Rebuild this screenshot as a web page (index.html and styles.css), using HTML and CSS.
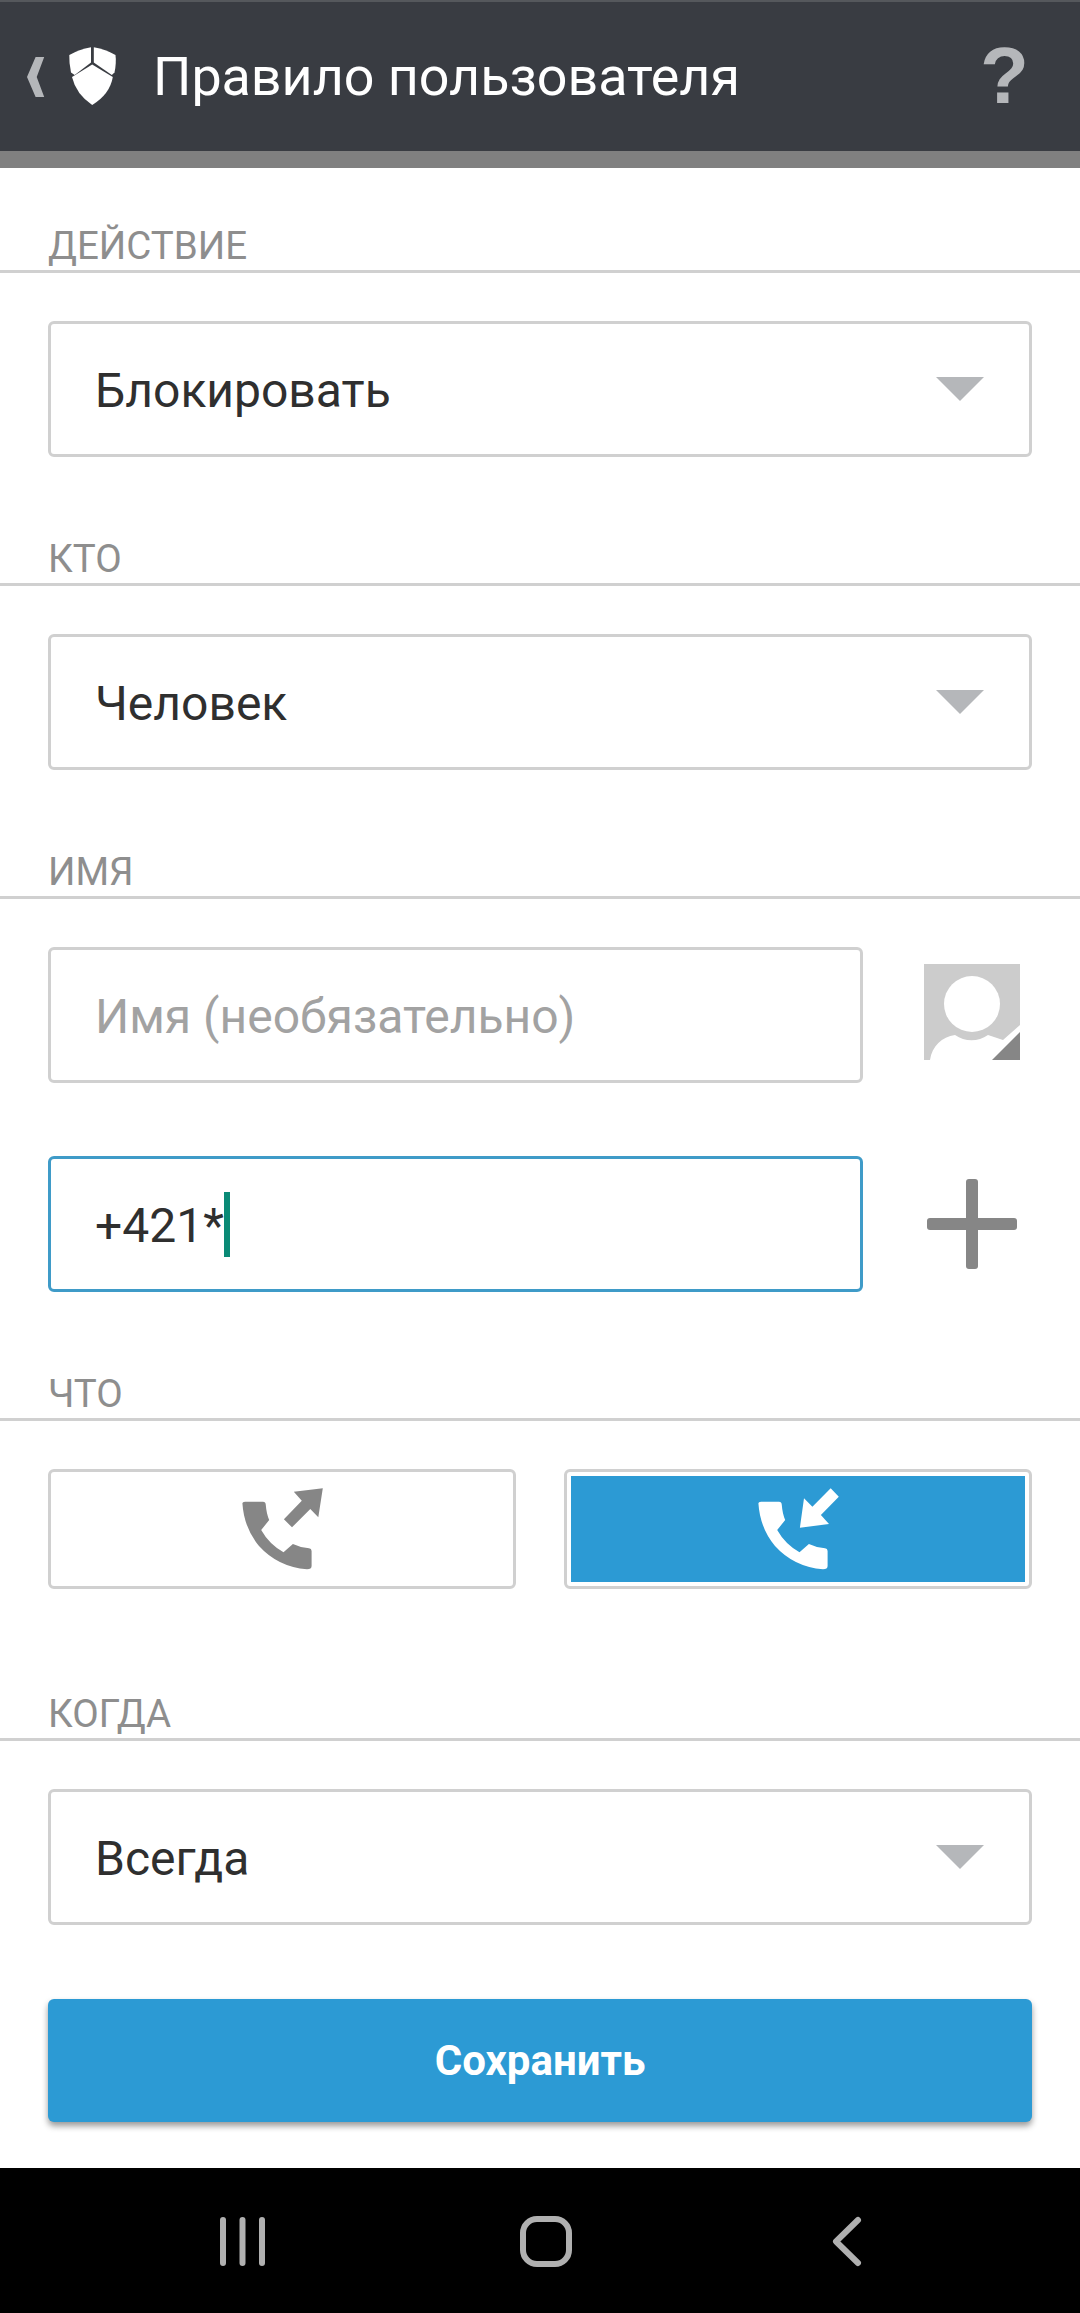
FILE: index.html
```html
<!DOCTYPE html>
<html lang="ru">
<head>
<meta charset="utf-8">
<title>Правило пользователя</title>
<link rel="stylesheet" href="styles.css">
</head>
<body>
<div class="app">
  <header class="header">
    <svg class="back" viewBox="0 0 18 40"><polygon points="17.2,0 8.6,0 0,20 8.6,40 17.2,40 9.7,20"/></svg>
    <svg class="shield" viewBox="0 0 48 58"><path d="M22 0.300V15.500L5.700 28 2 25.500Q0 16 0.300 8Q10 2.500 22 0.300Z"/><path d="M24.800 0.300V15.500L42.800 28 45.500 25.500Q47.500 16 46.500 8Q37 2.500 24.800 0.300Z"/><path d="M23.200 17.500L43.800 30Q41 47 23.200 58Q7 47 3 30Z"/></svg>
    <h1 class="title">Правило пользователя</h1>
    <span class="help">?</span>
  </header>
  <main class="form">
    <section class="section">
      <h2 class="section-head">ДЕЙСТВИЕ</h2>
      <div class="section-body">
        <div class="field select"><span>Блокировать</span><i class="caret-down"></i></div>
      </div>
    </section>
    <section class="section">
      <h2 class="section-head">КТО</h2>
      <div class="section-body">
        <div class="field select"><span>Человек</span><i class="caret-down"></i></div>
      </div>
    </section>
    <section class="section section-name">
      <h2 class="section-head">ИМЯ</h2>
      <div class="section-body rows">
        <div class="row">
          <div class="field grow placeholder">Имя (необязательно)</div>
          <svg class="side-icon avatar" viewBox="0 0 96 96">
            <rect width="96" height="96" fill="#cccccc"/>
            <circle cx="48" cy="40" r="28" fill="#fff"/>
            <path d="M6 96C8 82 18 73 31 71C41 78 54 78 64 71L79 76L96 61V96Z" fill="#fff"/>
            <polygon points="96,68 68,96 96,96" fill="#868686"/>
          </svg>
        </div>
        <div class="row">
          <div class="field grow active">+421*<i class="text-caret"></i></div>
          <svg class="side-icon plus" viewBox="0 0 96 90">
            <rect x="3" y="39" width="90" height="12" rx="3"/>
            <rect x="42" y="0" width="12" height="90" rx="3"/>
          </svg>
        </div>
      </div>
    </section>
    <section class="section section-what">
      <h2 class="section-head">ЧТО</h2>
      <div class="section-body toggles">
        <div class="toggle">
          <svg class="call" viewBox="0 0 84 82"><path d="M2.400 15.300Q2.400 13.700 5 13.700H23Q25.600 13.700 25.800 17Q26.500 26 29.200 32L21.200 42Q29 56 43.500 64.300L52.900 56Q60 59.500 69 60.300Q71.600 60.500 71.600 63V78Q71.600 81.300 67 81.300Q38 79 19 58Q4 40 2.400 15.300Z"/><polygon points="82.800,0.300 53.800,3.700 61.800,12.700 43.900,31.300 52,39.300 70.300,21 78.300,29.300"/></svg>
        </div>
        <div class="toggle on">
          <div class="toggle-fill">
            <svg class="call" viewBox="0 0 84 82"><path d="M2.400 15.300Q2.400 13.700 5 13.700H23Q25.600 13.700 25.800 17Q26.500 26 29.200 32L21.200 42Q29 56 43.500 64.300L52.900 56Q60 59.500 69 60.300Q71.600 60.500 71.600 63V78Q71.600 81.300 67 81.300Q38 79 19 58Q4 40 2.400 15.300Z"/><polygon points="43.900,39.700 73,36 64.900,27 82.800,8.700 74.700,0.300 56.400,18.700 48,10.300"/></svg>
          </div>
        </div>
      </div>
    </section>
    <section class="section">
      <h2 class="section-head">КОГДА</h2>
      <div class="section-body">
        <div class="field select"><span>Всегда</span><i class="caret-down"></i></div>
      </div>
    </section>
    <div class="save-wrap"><button class="save">Сохранить</button></div>
  </main>
  <nav class="nav">
    <svg class="nav-svg" viewBox="0 0 1080 145">
      <g fill="#b0b0b0">
        <rect x="220" y="49" width="6" height="49" rx="3"/>
        <rect x="239.500" y="49" width="6" height="49" rx="3"/>
        <rect x="259" y="49" width="6" height="49" rx="3"/>
      </g>
      <rect x="523" y="51" width="46" height="45" rx="14" fill="none" stroke="#b0b0b0" stroke-width="6"/>
      <path d="M858 52L836 73.500L858 95" fill="none" stroke="#b0b0b0" stroke-width="6" stroke-linecap="round" stroke-linejoin="round"/>
    </svg>
  </nav>
</div>
</body>
</html>
```
FILE: styles.css
```css
* { box-sizing: border-box; }
html, body { margin: 0; padding: 0; }
body { background: #fff; font-family: Roboto, "Noto Sans", sans-serif; color: #2f2f2f; }
.app { width: 1080px; height: 2313px; display: flex; flex-direction: column; overflow: hidden; }

.header {
  height: 168px;
  background: #393c42;
  border-top: 2px solid #55585c;
  border-bottom: 17px solid #808080;
  display: flex;
  align-items: center;
  padding: 0 48px 0 27px;
}
.back { width: 18px; height: 40px; fill: #b5b7ba; }
.shield { width: 48px; height: 58px; fill: #fff; margin-left: 24px; margin-top: -2px; }
.title { margin: 0 0 0 36px; font-size: 53.8px; font-weight: 400; color: #fff; flex: 1; white-space: nowrap; }
.help { font-family: "Liberation Sans", sans-serif; font-weight: 700; font-size: 80px; line-height: 1; color: #b5b7ba; width: 44px; text-align: center; margin-right: 8px; margin-top: -2px; }

.form { flex: 1; display: flex; flex-direction: column; }
.section-head {
  margin: 39px 0 0;
  height: 66px;
  border-bottom: 3px solid #d0d0d0;
  padding: 19px 0 0 48px;
  font-size: 38.5px;
  line-height: 40px;
  font-weight: 400;
  color: #8e8e8e;
}
.section-body { padding: 48px 48px 24px; }
.section-what .section-body { padding-bottom: 47px; }

.field {
  height: 136px;
  border: 3px solid #d0d0d0;
  border-radius: 6px;
  display: flex;
  align-items: center;
  padding: 3px 45px 0 44px;
  font-size: 48px;
  color: #2f2f2f;
  background: #fff;
}
.select { justify-content: space-between; }
.caret-down { width: 0; height: 0; margin-top: -3px; border-left: 24px solid transparent; border-right: 24px solid transparent; border-top: 24px solid #b5b7ba; }
.grow { flex: 1; }
.placeholder { color: #a2a2a2; }
.active { border-color: #3f9bc8; }
.text-caret { width: 6px; height: 65px; background: #0a8a76; margin-top: -3px; }
.rows { display: flex; flex-direction: column; gap: 73px; }
.row { display: flex; align-items: center; gap: 61px; }
.side-icon { width: 96px; flex: none; margin-right: 12px; }
.avatar { height: 96px; margin-top: -6px; }
.plus { height: 90px; fill: #868686; }

.toggles { display: grid; grid-template-columns: 1fr 1fr; gap: 48px; }
.toggle { height: 120px; border: 3px solid #d0d0d0; border-radius: 6px; display: flex; align-items: center; justify-content: center; background: #fff; }
.toggle.on { padding: 4px; }
.toggle-fill { flex: 1; height: 100%; background: #2c9ad4; display: flex; align-items: center; justify-content: center; }
.call { width: 84px; height: 82px; fill: #868686; }
.on .call { fill: #fff; }

.save-wrap { padding: 50px 48px 0; }
.save {
  width: 100%;
  height: 123px;
  border: 0;
  border-radius: 6px;
  background: #2c9ad4;
  color: #fff;
  font-family: Roboto, sans-serif;
  font-size: 42px;
  font-weight: 700;
  box-shadow: 0 4px 6px rgba(0,0,0,.4);
}

.nav { height: 145px; background: #000; flex: none; }
.nav-svg { display: block; width: 1080px; height: 145px; }
```
